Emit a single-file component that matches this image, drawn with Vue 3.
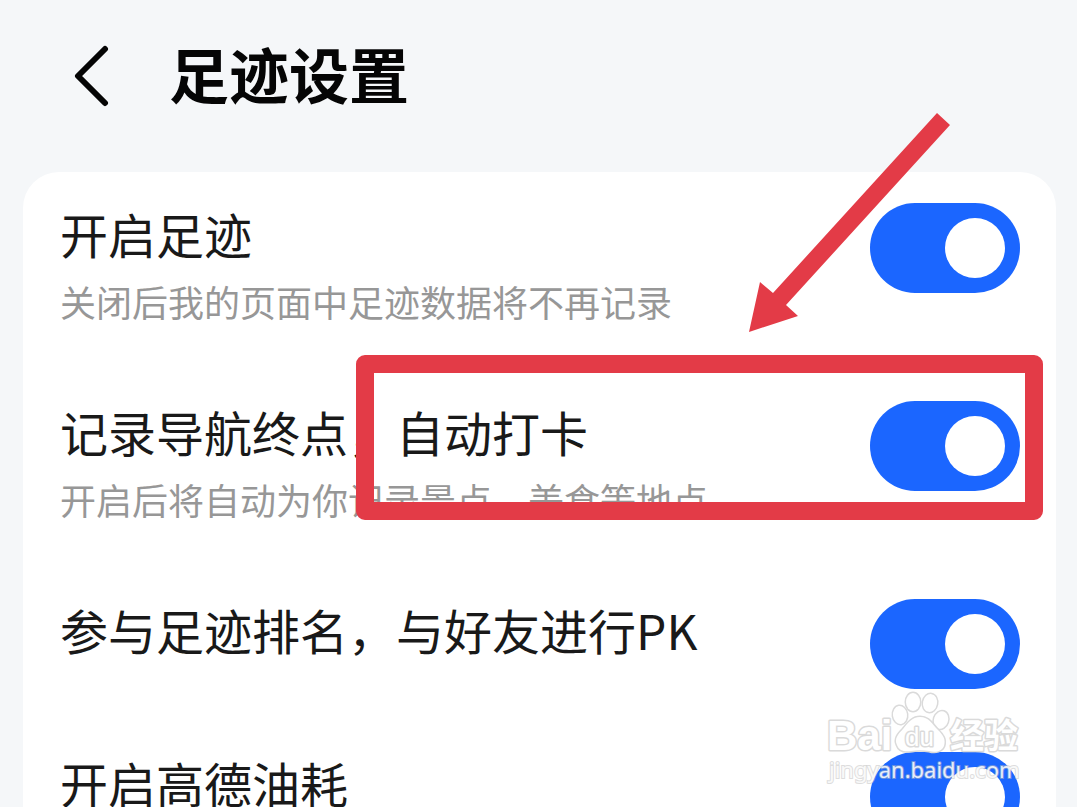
<script setup>
import { reactive } from 'vue'

const settings = reactive([
  { id: 'footprint', title: '开启足迹', note: '关闭后我的页面中足迹数据将不再记录', on: true },
  { id: 'checkin', title: '记录导航终点，自动打卡', note: '开启后将自动为你记录景点、美食等地点', on: true },
  { id: 'ranking', title: '参与足迹排名，与好友进行PK', note: '', on: true },
  { id: 'fuel', title: '开启高德油耗', note: '', on: true },
])
</script>

<template>
  <div class="page">
    <header class="bar">
      <button class="back" type="button" aria-label="返回">
        <svg width="36" height="64" viewBox="0 0 36 64" fill="none">
          <path d="M32 5L5 32L32 59" stroke="#050505" stroke-width="6" stroke-linecap="round" stroke-linejoin="round" />
        </svg>
      </button>
      <h1>足迹设置</h1>
    </header>

    <main class="card">
      <section v-for="item in settings" :key="item.id" class="row">
        <div class="copy">
          <label class="title" :for="item.id">{{ item.title }}</label>
          <p v-if="item.note" class="note">{{ item.note }}</p>
        </div>
        <input :id="item.id" v-model="item.on" class="switch" type="checkbox" role="switch" />
      </section>
    </main>

    <svg class="overlay" width="1077" height="807" viewBox="0 0 1077 807" aria-hidden="true">
      <g class="mark">
        <rect x="365" y="364" width="669" height="147" fill="none" stroke="#e33b47" stroke-width="18" stroke-linejoin="round" />
        <path d="M937 113L950 125L786 305L798 316L749 332L760 282L773 293Z" fill="#e33b47" />
      </g>
      <g class="watermark">
        <g class="outlined">
          <text class="latin" x="827" y="750" font-size="42">Bai</text>
          <ellipse cx="900" cy="715" rx="7" ry="9" transform="rotate(-8 900 715)" />
          <ellipse cx="913" cy="702" rx="7" ry="9" />
          <ellipse cx="930" cy="703" rx="7" ry="9" transform="rotate(10 930 703)" />
          <ellipse cx="941" cy="720" rx="7" ry="9" transform="rotate(18 941 720)" />
          <path d="M920 717C912 717 908 723 903 729C898 734 894 739 897 745C899 751 905 752 911 751C917 750 923 750 929 751C936 753 942 751 944 746C946 739 943 735 938 730C932 724 929 717 920 717Z" />
          <text class="latin thin" x="905" y="746" font-size="26">du</text>
          <text class="han" x="950" y="748" font-size="34">经验</text>
        </g>
        <text class="url" x="829" y="778" font-size="22">jingyan.baidu.com</text>
      </g>
    </svg>
  </div>
</template>

<style>
body {
  margin: 0;
}
</style>

<style scoped>
.page {
  position: relative;
  display: flex;
  flex-direction: column;
  height: 100vh;
  overflow: hidden;
  background: #f5f7f9;
  font-family: "Noto Sans CJK SC", sans-serif;
  color: #191919;
}

.bar {
  display: flex;
  flex: none;
  align-items: center;
  gap: 60px;
  box-sizing: border-box;
  height: 172px;
  padding: 0 73px 20px;
}

.back {
  display: flex;
  padding: 0;
  border: 0;
  background: none;
}

h1 {
  margin: 0;
  padding-bottom: 6px;
  font-size: 60px;
  line-height: 80px;
  font-weight: 700;
  color: #050505;
}

.card {
  flex: none;
  margin: 0 21px 0 23px;
  padding: 31px 36px 0 37px;
  border-radius: 36px 36px 0 0;
  background: #fff;
}

.row {
  display: flex;
  align-items: flex-start;
  justify-content: space-between;
  padding-bottom: 63px;
}

.title {
  display: block;
  font-size: 48px;
  line-height: 61px;
}

.note {
  margin: 0;
  font-size: 36px;
  line-height: 74px;
  color: #979797;
}

.switch {
  appearance: none;
  display: flex;
  flex: none;
  align-items: center;
  box-sizing: border-box;
  width: 150px;
  height: 90px;
  margin: 0;
  padding: 0 15px;
  border-radius: 45px;
  background: #c9ccd1;
}

.switch::before {
  content: "";
  width: 60px;
  height: 60px;
  border-radius: 50%;
  background: #fff;
}

.switch:checked {
  justify-content: flex-end;
  background: #1b66ff;
}

.overlay {
  position: absolute;
  top: 0;
  left: 0;
  pointer-events: none;
}

.outlined {
  fill: #fff;
  stroke: #dadada;
  stroke-width: 3px;
  stroke-linejoin: round;
  paint-order: stroke;
}

.latin {
  font-family: "Liberation Sans", sans-serif;
  font-weight: 700;
}

.thin {
  font-weight: 400;
}

.han {
  font-family: "Noto Sans CJK SC", sans-serif;
  font-weight: 700;
}

.url {
  font-family: "Noto Sans", sans-serif;
  fill: #fff;
  fill-opacity: 0.85;
  stroke: #bcbcbc;
  stroke-opacity: 0.5;
  stroke-width: 2px;
  paint-order: stroke;
}
</style>
